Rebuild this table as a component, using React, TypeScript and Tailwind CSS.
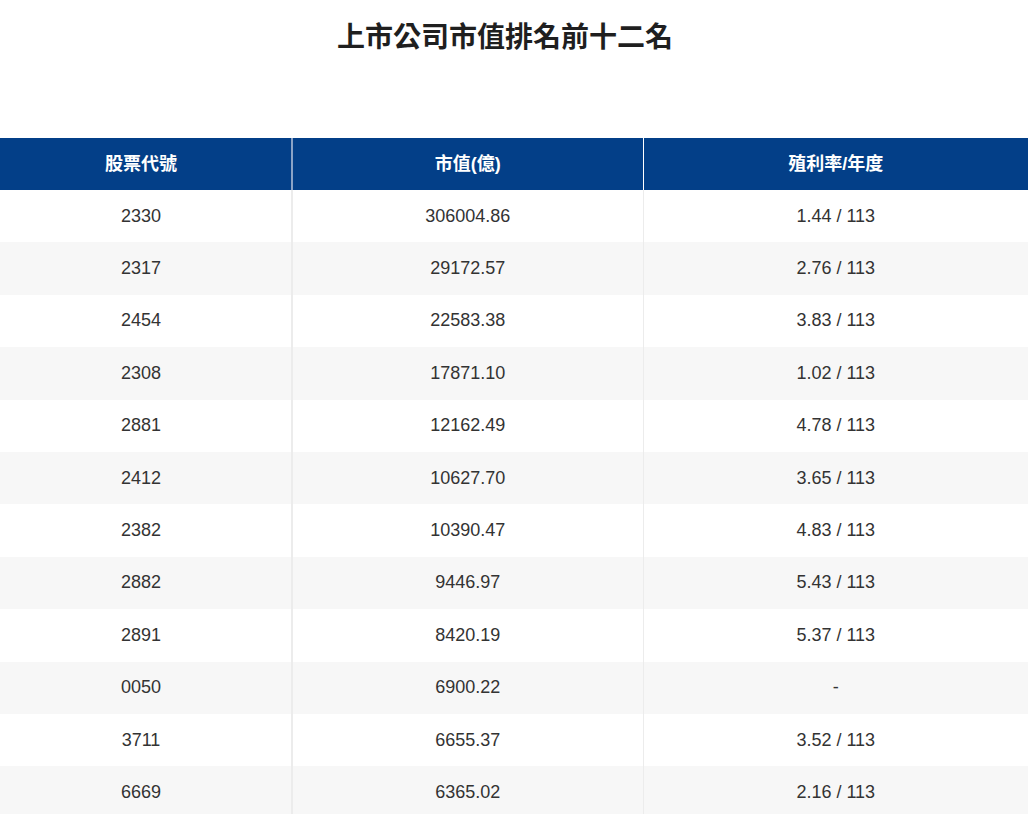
const rows = [
  { code: '2330', cap: '306004.86', yieldYear: '1.44 / 113' },
  { code: '2317', cap: '29172.57', yieldYear: '2.76 / 113' },
  { code: '2454', cap: '22583.38', yieldYear: '3.83 / 113' },
  { code: '2308', cap: '17871.10', yieldYear: '1.02 / 113' },
  { code: '2881', cap: '12162.49', yieldYear: '4.78 / 113' },
  { code: '2412', cap: '10627.70', yieldYear: '3.65 / 113' },
  { code: '2382', cap: '10390.47', yieldYear: '4.83 / 113' },
  { code: '2882', cap: '9446.97', yieldYear: '5.43 / 113' },
  { code: '2891', cap: '8420.19', yieldYear: '5.37 / 113' },
  { code: '0050', cap: '6900.22', yieldYear: '-' },
  { code: '3711', cap: '6655.37', yieldYear: '3.52 / 113' },
  { code: '6669', cap: '6365.02', yieldYear: '2.16 / 113' },
]

const font = "font-['Liberation_Sans','Noto_Sans_CJK_TC',sans-serif]"

export default function App() {
  return (
    <div className={`${font} w-[1028px] min-h-[814px] bg-white text-[#333]`}>
      <div className="h-[138px] pt-[18px] pr-[18px] text-center">
        <h1 className="text-[28px] font-bold leading-[40px] text-[#1f1f1f]">
          上市公司市值排名前十二名
        </h1>
      </div>

      <table className="w-full table-fixed border-collapse">
        <colgroup>
          <col className="w-[292px]" />
          <col className="w-[351px]" />
          <col />
        </colgroup>
        <thead>
          <tr className="h-[52px] bg-[#033f88] text-[18px] font-bold text-white">
            <th className="border-r-2 border-[#8ba3c6] pr-[9px] font-bold">股票代號</th>
            <th className="border-r border-white font-bold">市值(億)</th>
            <th className="font-bold">殖利率/年度</th>
          </tr>
        </thead>
        <tbody>
          {rows.map((row, i) => (
            <tr
              key={row.code}
              className={`h-[52.4px] text-[18px] ${i % 2 === 1 ? 'bg-[#f7f7f7]' : 'bg-white'}`}
            >
              <td className="border-r-2 border-[#ececec] pr-[9px] text-center">{row.code}</td>
              <td className="border-r border-[#ececec] text-center">{row.cap}</td>
              <td className="text-center">{row.yieldYear}</td>
            </tr>
          ))}
        </tbody>
      </table>
    </div>
  )
}
